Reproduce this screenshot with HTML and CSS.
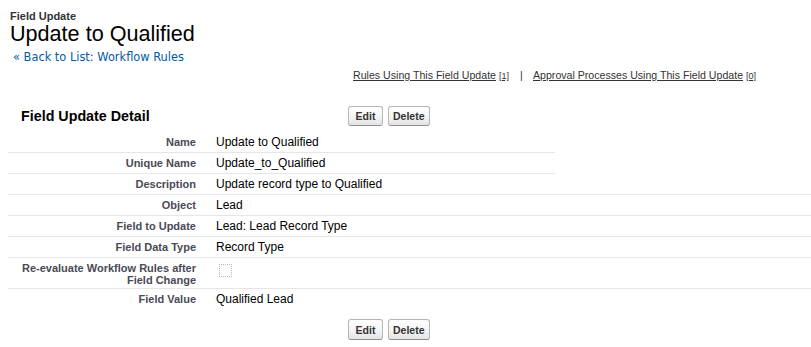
FILE: index.html
```html
<!DOCTYPE html>
<html>
<head>
<meta charset="utf-8">
<link rel="stylesheet" href="styles.css">
</head>
<body>
<div class="page">
  <div class="pt-header">
    <div class="pt-type">Field Update</div>
    <h1 class="pt-title">Update to Qualified</h1>
    <div class="breadcrumb">«&nbsp;<a href="#">Back to List: Workflow Rules</a></div>
  </div>
  <div class="rel-links">
    <a href="#">Rules Using This Field Update</a>&nbsp;<a class="count" href="#">[1]</a>
    <span class="sep">|</span>
    <a href="#">Approval Processes Using This Field Update</a>&nbsp;<a class="count" href="#">[0]</a>
  </div>
  <div class="detail">
    <div class="pb-header">
      <h2 class="pb-title">Field Update Detail</h2>
      <div class="pb-buttons">
        <button class="btn btn-edit">Edit</button>
        <button class="btn">Delete</button>
      </div>
    </div>
    <div class="rows">
      <div class="row short"><div class="label">Name</div><div class="value">Update to Qualified</div></div>
      <div class="row short"><div class="label">Unique Name</div><div class="value">Update_to_Qualified</div></div>
      <div class="row"><div class="label">Description</div><div class="value">Update record type to Qualified</div></div>
      <div class="row"><div class="label">Object</div><div class="value">Lead</div></div>
      <div class="row"><div class="label">Field to Update</div><div class="value">Lead: Lead Record Type</div></div>
      <div class="row"><div class="label">Field Data Type</div><div class="value">Record Type</div></div>
      <div class="row tall"><div class="label">Re-evaluate Workflow Rules after Field Change</div><div class="value"><span class="checkbox"></span></div></div>
      <div class="row last"><div class="label">Field Value</div><div class="value">Qualified Lead</div></div>
    </div>
    <div class="pb-bottom">
      <button class="btn btn-edit">Edit</button>
      <button class="btn">Delete</button>
    </div>
  </div>
</div>
</body>
</html>
```

FILE: styles.css
```css
* { box-sizing: border-box; }
html, body { margin: 0; padding: 0; background: #fff; }
body {
  font-family: "Liberation Sans", Arial, sans-serif;
  color: #000;
  width: 811px;
  height: 347px;
  overflow: hidden;
}
.page { padding-top: 10px; }
.pt-header { padding-left: 10px; }
.pt-type {
  font-size: 11px;
  font-weight: bold;
  line-height: 13px;
  color: #333;
}
.pt-title {
  margin: 0;
  font-size: 21.6px;
  font-weight: normal;
  line-height: 22px;
  color: #000;
}
.breadcrumb {
  margin-top: 6px;
  padding-left: 3px;
  font-family: "DejaVu Sans", Verdana, sans-serif;
  font-size: 11.4px;
  line-height: 13px;
  color: #015ba7;
}
.breadcrumb a { color: #015ba7; text-decoration: none; }
.rel-links {
  margin-top: 4px;
  padding-right: 55px;
  text-align: right;
  font-size: 10.6px;
  line-height: 14px;
  color: #333;
}
.rel-links a { color: #333; text-decoration: underline; }
.rel-links .count { font-size: 9px; }
.rel-links .sep { margin: 0 8px; }
.detail { margin-top: 23px; padding-left: 8px; }
.pb-header {
  display: flex;
  align-items: center;
  height: 20px;
}
.pb-title {
  margin: 0;
  width: 340px;
  padding-left: 13px;
  font-size: 14.3px;
  font-weight: bold;
  color: #000;
}
.pb-buttons { display: flex; gap: 5px; }
.btn {
  height: 20px;
  padding: 0 4px;
  border: 1px solid #b5b5b5;
  border-bottom-color: #8f8f8f;
  border-radius: 3px;
  background: linear-gradient(#ffffff, #f2f2f2 60%, #e4e4e4);
  font-family: "Liberation Sans", Arial, sans-serif;
  font-size: 10.5px;
  font-weight: bold;
  color: #333;
  line-height: 18px;
}
.btn-edit { min-width: 35px; }
.rows { margin-top: 6px; }
.row {
  display: flex;
  border-bottom: 1px solid #e6e6e6;
  width: 803px;
}
.row.short { width: 547px; }
.row.last { border-bottom: none; }
.label {
  width: 198px;
  flex: none;
  padding: 4px 10px 4px 0;
  text-align: right;
  font-size: 11px;
  font-weight: bold;
  line-height: 12px;
  color: #4a4a56;
}
.row.tall .label { padding-bottom: 2px; }
.value {
  padding: 4px 10px 4px 10px;
  font-size: 12px;
  line-height: 12px;
  color: #000;
}
.checkbox {
  display: block;
  width: 13px;
  height: 13px;
  margin: 2px 0 0 3px;
  border: 1px dotted #b8b8b8;
}
.pb-bottom {
  display: flex;
  gap: 5px;
  padding-left: 340px;
  margin-top: 10px;
}
.pb-bottom .btn { height: 21px; }
```
